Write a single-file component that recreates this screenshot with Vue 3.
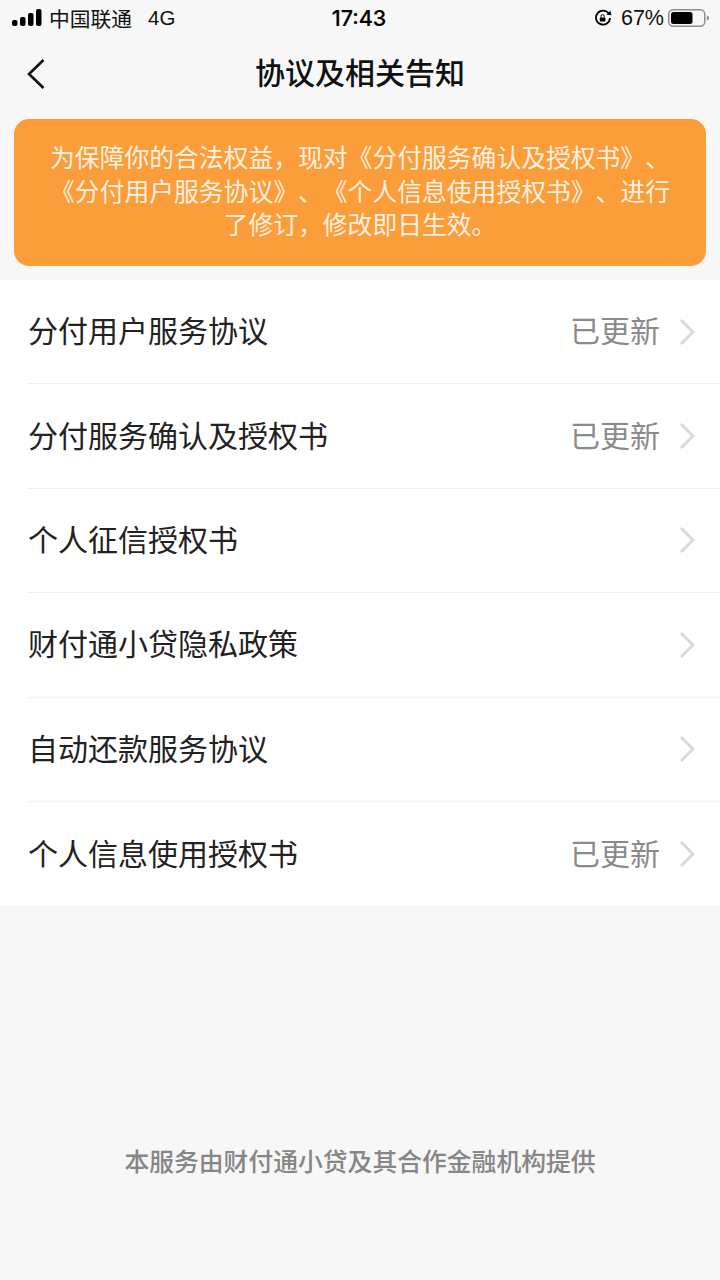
<script setup>
const items = [
  { t: '分付用户服务协议', u: true },
  { t: '分付服务确认及授权书', u: true },
  { t: '个人征信授权书', u: false },
  { t: '财付通小贷隐私政策', u: false },
  { t: '自动还款服务协议', u: false },
  { t: '个人信息使用授权书', u: true },
]
</script>

<template>
  <div class="page">
    <div class="status">
      <div class="left">
        <svg class="signal" width="30" height="18" viewBox="0 0 30 18">
          <rect x="0" y="11" width="5.5" height="6" rx="2" fill="#000" />
          <rect x="8" y="8" width="5.5" height="9" rx="2" fill="#000" />
          <rect x="16" y="4" width="5.5" height="13" rx="2" fill="#000" />
          <rect x="24" y="0" width="5.5" height="17" rx="2" fill="#000" />
        </svg>
        <span class="carrier">中国联通</span>
        <span class="net">4G</span>
      </div>
      <div class="time">17:43</div>
      <div class="right">
        <svg class="lock" width="18" height="18" viewBox="0 0 18 18">
          <path d="M14.6 4.4 A7 7 0 1 0 16 9" fill="none" stroke="#000" stroke-width="1.8" />
          <path d="M12.6 5.8 L17.4 6.2 L16.4 1.6 Z" fill="#000" />
          <rect x="5.8" y="8.4" width="5.6" height="4.2" rx=".8" fill="#000" />
          <path d="M7 8.4 V7.2 a1.6 1.6 0 0 1 3.2 0 V8.4" fill="none" stroke="#000" stroke-width="1" />
        </svg>
        <span class="pct">67%</span>
        <svg width="42" height="20" viewBox="0 0 42 20">
          <rect x="0.75" y="1.75" width="36" height="16.5" rx="4.5" fill="none" stroke="#8e8e8e" stroke-width="1.5" />
          <rect x="3" y="4" width="21.5" height="12" rx="2.5" fill="#000" />
          <path d="M38.8 7.5 c1.6 .4 2.4 1.4 2.4 2.5 s-.8 2.1 -2.4 2.5 Z" fill="#8e8e8e" />
        </svg>
      </div>
    </div>

    <div class="nav">
      <svg class="back" width="20" height="32" viewBox="0 0 20 32">
        <path d="M17.5 2 L3 16 L17.5 30" fill="none" stroke="#111" stroke-width="2.6" />
      </svg>
      <div class="title">协议及相关告知</div>
    </div>

    <div class="notice-wrap">
      <div class="notice">为保障你的合法权益，现对《分付服务确认及授权书》、<br />《分付用户服务协议》、《个人信息使用授权书》、进行<br />了修订，修改即日生效。</div>
    </div>

    <div class="list">
      <div v-for="(it, i) in items" :key="i" class="row">
        <span class="label">{{ it.t }}</span>
        <span v-if="it.u" class="upd">已更新</span>
        <svg class="chev" width="16" height="28" viewBox="0 0 16 28">
          <path d="M2 2 L14 14 L2 26" fill="none" stroke="#d9d9d9" stroke-width="3" />
        </svg>
      </div>
    </div>

    <div class="foot">本服务由财付通小贷及其合作金融机构提供</div>
  </div>
</template>

<style scoped>
.page {
  width: 720px;
  height: 1280px;
  background: #f7f7f7;
  display: flex;
  flex-direction: column;
  overflow: hidden;
  font-family: "Noto Sans CJK SC", "Liberation Sans", sans-serif;
}
.status {
  height: 38px;
  display: grid;
  grid-template-columns: 1fr auto 1fr;
  align-items: center;
  padding: 0 10px 2px 12px;
  box-sizing: border-box;
  color: #000;
}
.left { display: flex; align-items: center; }
.signal { margin-right: 7px; }
.carrier { font-size: 20.75px; line-height: 24px; color: #111; }
.net { font-family: "Liberation Sans", sans-serif; font-size: 20.5px; margin-left: 16px; color: #111; }
.time { font-family: Inter, sans-serif; font-size: 21.5px; font-weight: 500; margin-right: 4px; -webkit-text-stroke: .2px #000; }
.right { display: flex; align-items: center; justify-content: flex-end; }
.lock { margin-right: 9px; }
.pct { font-family: "Liberation Sans", sans-serif; font-size: 21.5px; margin-right: 4px; color: #111; }
.nav {
  height: 72px;
  position: relative;
  display: flex;
  align-items: center;
  justify-content: center;
}
.back { position: absolute; left: 26px; top: 20px; }
.title { font-size: 30px; font-weight: 500; color: #111; line-height: 72px; margin-bottom: 7px; }
.notice-wrap { padding: 9px 14px 14px; }
.notice {
  height: 147px;
  box-sizing: border-box;
  background: #fc9d3c;
  border-radius: 15px;
  color: #fff1df;
  font-size: 24.8px;
  line-height: 33.5px;
  text-align: center;
  padding: 21px 0 0;
  white-space: nowrap;
  text-spacing-trim: space-all;
}
.list { background: #fff; }
.row {
  height: 104.4px;
  margin-left: 28px;
  padding-right: 25px;
  box-sizing: border-box;
  display: flex;
  align-items: center;
  border-bottom: 1px solid #efefef;
}
.row:last-child { border-bottom: none; }
.label { flex: 1; font-size: 30px; color: #222; margin-bottom: 5px; }
.upd { font-size: 30px; color: #8a8a8a; margin-right: 19px; margin-bottom: 5px; }
.chev { display: block; }
.foot {
  margin-top: 235.6px;
  text-align: center;
  font-size: 24.8px;
  font-weight: 500;
  line-height: 36px;
  color: #868686;
}
</style>

<style>
html, body { background: #f7f7f7; }
</style>
